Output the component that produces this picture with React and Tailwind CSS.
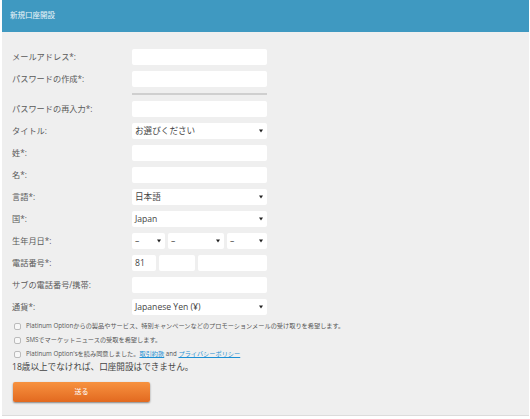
const font = { fontFamily: '"Open Sans", "Noto Sans CJK JP", sans-serif' };

const Arrow = () => (
    <span className="absolute right-[4px] top-1/2 -translate-y-1/2 w-0 h-0 border-l-[2.5px] border-r-[2.5px] border-t-[3px] border-l-transparent border-r-transparent border-t-[#222]" />
);

const Box = ({ className = 'w-[135px]', children, arrow }) => (
    <div className={`relative h-4 bg-white rounded-[2px] flex items-center pl-[3px] text-[8.6px] text-[#444] ${className}`}>
        {children}
        {arrow && <Arrow />}
    </div>
);

const Row = ({ label, children }) => (
    <div className="flex items-center">
        <div className="w-[120px] text-[8.2px] text-[#5a5a5a]">{label}</div>
        {children}
    </div>
);

const Check = ({ children }) => (
    <div className="flex items-center gap-[5px] text-[6.2px] text-[#555] leading-none">
        <span className="w-[7px] h-[7px] rounded-[2px] border border-[#bbb] bg-[#f7f7f7]" />
        <span>{children}</span>
    </div>
);

export default function App() {
    return (
        <div className="w-[530px] h-[419px] bg-white" style={font}>
            <div className="ml-[2px] w-[527px] h-[416px] bg-[#efefef] border-b border-[#dcdcdc] flex flex-col">
                <div className="h-8 bg-[#3f99c1] flex items-center pl-[8px] text-[7.5px] text-[#eef6fa]">新規口座開設</div>
                <div className="pl-[10px] pt-[17px] flex flex-col gap-[6px]">
                    <Row label="メールアドレス*:"><Box /></Row>
                    <Row label="パスワードの作成*:"><Box /></Row>
                    <div className="ml-[120px] w-[135px] h-[2px] bg-[#cfcfcf]" />
                    <Row label="パスワードの再入力*:"><Box /></Row>
                    <Row label="タイトル:"><Box arrow>お選びください</Box></Row>
                    <Row label="姓*:"><Box /></Row>
                    <Row label="名*:"><Box /></Row>
                    <Row label="言語*:"><Box arrow>日本語</Box></Row>
                    <Row label="国*:"><Box arrow>Japan</Box></Row>
                    <Row label="生年月日*:">
                        <div className="flex gap-[3px]">
                            <Box className="w-[33px]" arrow>–</Box>
                            <Box className="w-[56px]" arrow>–</Box>
                            <Box className="w-[40px]" arrow>–</Box>
                        </div>
                    </Row>
                    <Row label="電話番号*:">
                        <div className="flex gap-[3px]">
                            <Box className="w-[24px]">81</Box>
                            <Box className="w-[36px]" />
                            <Box className="w-[69px]" />
                        </div>
                    </Row>
                    <Row label="サブの電話番号/携帯:"><Box /></Row>
                    <Row label="通貨*:"><Box arrow>Japanese Yen (¥)</Box></Row>
                </div>
                <div className="pl-[12px] mt-[8px] flex flex-col gap-[7px]">
                    <Check>Platinum Optionからの製品やサービス、特別キャンペーンなどのプロモーションメールの受け取りを希望します。</Check>
                    <Check>SMSでマーケットニュースの受取を希望します。</Check>
                    <Check>
                        Platinum Option'sを読み同意しました。<a className="text-[#1d8fd3] underline">取引約款</a> and <a className="text-[#1d8fd3] underline">プライバシーポリシー</a>
                    </Check>
                </div>
                <div className="pl-[10px] mt-[3px] text-[8.6px] text-[#444]">18歳以上でなければ、口座開設はできません。</div>
                <button className="ml-[11px] mt-[8px] w-[137px] h-5 rounded-[2px] bg-gradient-to-b from-[#f7923f] to-[#e2691f] shadow-[0_1px_2px_rgba(0,0,0,0.45)] text-white text-[7px]">送る</button>
            </div>
        </div>
    );
}
